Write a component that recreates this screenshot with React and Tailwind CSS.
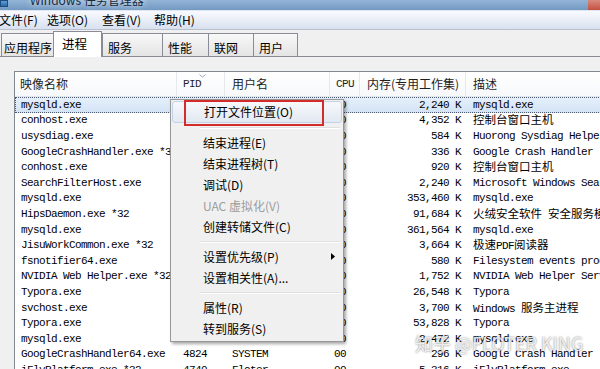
import React from "react";

const CJK = /([\u2e80-\u9fff\uff00-\uffef\u3000-\u303f]+)/;

function Mixed({ text }) {
  const parts = text.split(CJK);
  return parts.map((p, i) =>
    i % 2 === 1 ? (
      <span key={i} className="font-['Noto_Sans_CJK_SC',sans-serif] text-[11.5px] tracking-normal">
        {p}
      </span>
    ) : (
      <span key={i}>{p}</span>
    )
  );
}

const rows = [
  ["mysqld.exe", "3620", "Floter", "00", "2,240 K", "mysqld.exe"],
  ["conhost.exe", "3688", "Floter", "00", "4,352 K", "控制台窗口主机"],
  ["usysdiag.exe", "2340", "SYSTEM", "00", "584 K", "Huorong Sysdiag Helper"],
  ["GoogleCrashHandler.exe *32", "4816", "SYSTEM", "00", "336 K", "Google Crash Handler"],
  ["conhost.exe", "5124", "Floter", "00", "920 K", "控制台窗口主机"],
  ["SearchFilterHost.exe", "6032", "SYSTEM", "00", "2,240 K", "Microsoft Windows Search Filter Host"],
  ["mysqld.exe", "2980", "Floter", "00", "353,460 K", "mysqld.exe"],
  ["HipsDaemon.exe *32", "1876", "SYSTEM", "00", "91,684 K", "火绒安全软件 安全服务模块"],
  ["mysqld.exe", "3108", "Floter", "00", "361,564 K", "mysqld.exe"],
  ["JisuWorkCommon.exe *32", "5540", "Floter", "00", "3,664 K", "极速PDF阅读器"],
  ["fsnotifier64.exe", "6208", "Floter", "00", "580 K", "Filesystem events processor"],
  ["NVIDIA Web Helper.exe *32", "4412", "Floter", "00", "1,752 K", "NVIDIA Web Helper Service"],
  ["Typora.exe", "7016", "Floter", "00", "26,548 K", "Typora"],
  ["svchost.exe", "1048", "SYSTEM", "00", "3,700 K", "Windows 服务主进程"],
  ["Typora.exe", "7164", "Floter", "00", "53,828 K", "Typora"],
  ["mysqld.exe", "3352", "Floter", "00", "2,472 K", "mysqld.exe"],
  ["GoogleCrashHandler64.exe", "4824", "SYSTEM", "00", "296 K", "Google Crash Handler"],
  ["iFlyPlatform.exe *32", "4740", "Floter", "00", "5,316 K", "iFlyPlatform.exe"],
];

const menu = [
  { t: "打开文件位置(O)", hl: true },
  { sep: true },
  { t: "结束进程(E)" },
  { t: "结束进程树(T)" },
  { t: "调试(D)" },
  { t: "UAC 虚拟化(V)", dis: true },
  { t: "创建转储文件(C)" },
  { sep: true },
  { t: "设置优先级(P)", arrow: true },
  { t: "设置相关性(A)..." },
  { sep: true },
  { t: "属性(R)" },
  { t: "转到服务(S)" },
];

const tabs = [
  { t: "应用程序", w: "w-[52px]" },
  { t: "进程", w: "w-[49px]", sel: true },
  { t: "服务", w: "w-[60px]" },
  { t: "性能", w: "w-[46px]" },
  { t: "联网", w: "w-[45px]" },
  { t: "用户", w: "w-[45px]" },
];

export default function App() {
  return (
    <div className="relative w-[600px] h-[369px] overflow-hidden bg-[#f0f0f0] font-['Noto_Sans_CJK_SC',sans-serif] text-[12px] text-black">
      {/* title bar */}
      <div className="relative h-[11px] overflow-hidden bg-gradient-to-b from-[#93b4d6] to-[#7399c2] border-b border-[#dde6f1]">
        <div className="absolute left-0 top-0 w-[8px] h-[7px] bg-gradient-to-b from-[#5aa0d8] to-[#2d6aa8] border border-[#1d4d80]" />
        <div className="absolute left-[30px] top-[-8px] text-[12px] leading-[16px] text-[#1a2a3a] whitespace-nowrap [text-shadow:0_0_6px_rgba(255,255,255,0.9)]">
          Windows 任务管理器
        </div>
        <div className="absolute right-0 top-0 w-[12px] h-[11px] bg-gradient-to-b from-[#d88a7e] to-[#c2483a]" />
      </div>

      {/* menu bar */}
      <div className="flex h-[19px] items-center bg-gradient-to-b from-[#f9fafe] to-[#d9e1ef] border-b border-[#b9c0cf] leading-[16px] whitespace-nowrap">
        <div className="w-[48px] -ml-[1px]">文件(F)</div>
        <div className="w-[55px]">选项(O)</div>
        <div className="w-[52px]">查看(V)</div>
        <div>帮助(H)</div>
      </div>

      {/* tabs */}
      <div className="flex h-[27px] items-end border-b border-[#898c95] pl-[1px] whitespace-nowrap">
        {tabs.map((tab, i) =>
          tab.sel ? (
            <div
              key={i}
              className={`${tab.w} h-[26px] -mb-px bg-white border border-b-0 border-[#898c95] pl-[8px] pt-[4px] text-[12.5px] leading-[16px] relative z-10`}
            >
              {tab.t}
            </div>
          ) : (
            <div
              key={i}
              className={`${tab.w} h-[23px] bg-gradient-to-b from-[#f8f8f8] to-[#e4e4e4] border-t border-l border-[#898c95] last:border-r ${i === 0 ? "pl-[2px]" : "pl-[5px]"} pt-[6px] leading-[16px] overflow-hidden`}
            >
              {tab.t}
            </div>
          )
        )}
      </div>

      {/* panel */}
      <div className="pl-[14px] pt-[14px]">
        <div className="w-[700px] bg-white border border-[#828790]">
          {/* header */}
          <div className="relative flex h-[25px] items-center bg-gradient-to-b from-white to-[#f7f8fa] border-b border-[#e3e6ea] leading-[16px] text-[#1e1e1e] whitespace-nowrap">
            <div className="w-[162px] h-full flex items-center pl-[5px] border-r border-[#e5e8ec]">映像名称</div>
            <div className="relative w-[48px] h-full flex items-center pl-[6px] border-r border-[#e5e8ec] font-['Liberation_Mono',monospace] text-[11px] tracking-[-0.6px]">
              PID
              <svg className="absolute left-[22px] top-[2px]" width="7" height="4" viewBox="0 0 7 4">
                <path d="M0.5 0.5 L3.5 3.2 L6.5 0.5" fill="none" stroke="#97a5b8" strokeWidth="1" />
              </svg>
            </div>
            <div className="w-[105px] h-full flex items-center pl-[7px] border-r border-[#e5e8ec]">用户名</div>
            <div className="w-[30px] h-full flex items-center pl-[6px] border-r border-[#e5e8ec] font-['Liberation_Mono',monospace] text-[11px] tracking-[-0.6px]">CPU</div>
            <div className="w-[106px] h-full flex items-center pl-[7px] border-r border-[#e5e8ec]">内存(专用工作集)</div>
            <div className="flex-1 h-full flex items-center pl-[7px]">描述</div>
          </div>

          {/* rows */}
          {rows.map((r, i) => (
            <div
              key={i}
              className={`flex h-[15.6px] items-center whitespace-nowrap font-['Liberation_Mono',monospace] text-[11px] tracking-[-0.6px] leading-[14px] ${
                i === 0 ? "bg-gradient-to-b from-[#e6f0fb] to-[#d3e3f5] outline outline-1 outline-dotted outline-[#4a5a70] -outline-offset-1" : ""
              }`}
            >
              <div className="w-[162px] pl-[6px] overflow-hidden">{r[0]}</div>
              <div className="w-[48px] pl-[6px]">{r[1]}</div>
              <div className="w-[105px] pl-[7px]">{r[2]}</div>
              <div className="w-[30px] pl-[4px]">{r[3]}</div>
              <div className="w-[106px] pr-[5px] text-right">{r[4]}</div>
              <div className="flex-1 pl-[7px] overflow-hidden">
                <Mixed text={r[5]} />
              </div>
            </div>
          ))}
        </div>
      </div>

      {/* context menu */}
      <div className="absolute left-[170px] top-[99px] w-[174px] bg-[#f0f0f0] border border-[#979797] shadow-[2px_2px_3px_rgba(0,0,0,0.35)] pt-[1px] pb-[2px] px-[1px] leading-[16px] whitespace-nowrap">
        {menu.map((m, i) =>
          m.sep ? (
            <div key={i} className="h-[9px] flex flex-col justify-center pl-[28px] pr-[2px]">
              <div className="h-px bg-[#e0e0e0]" />
              <div className="h-px bg-white" />
            </div>
          ) : (
            <div
              key={i}
              className={`relative flex items-center pl-[31px] ${i === 0 ? "h-[22px]" : "h-[21px]"} ${
                m.hl ? "rounded-[3px] border border-[#c3d3e7] bg-gradient-to-b from-[#f6f8fc] to-[#e3e9f2]" : ""
              } ${m.dis ? "text-[#9c9c9c]" : "text-black"}`}
            >
              {m.t}
              {m.arrow && (
                <svg className="absolute left-[159px] top-[7px]" width="4" height="7" viewBox="0 0 4 7">
                  <path d="M0 0 L4 3.5 L0 7 Z" fill="#000" />
                </svg>
              )}
            </div>
          )
        )}
      </div>

      {/* red annotation box */}
      <div className="absolute left-[184px] top-[100px] w-[140px] h-[26px] border-2 border-[#d42b2b]" />

      {/* watermark */}
      <div className="absolute left-[415px] top-[332px] text-[18px] leading-[22px] text-white/80 [text-shadow:0_0_2px_rgba(0,0,0,0.55)] whitespace-nowrap">
        知乎 @FLOTER KING
      </div>
    </div>
  );
}
